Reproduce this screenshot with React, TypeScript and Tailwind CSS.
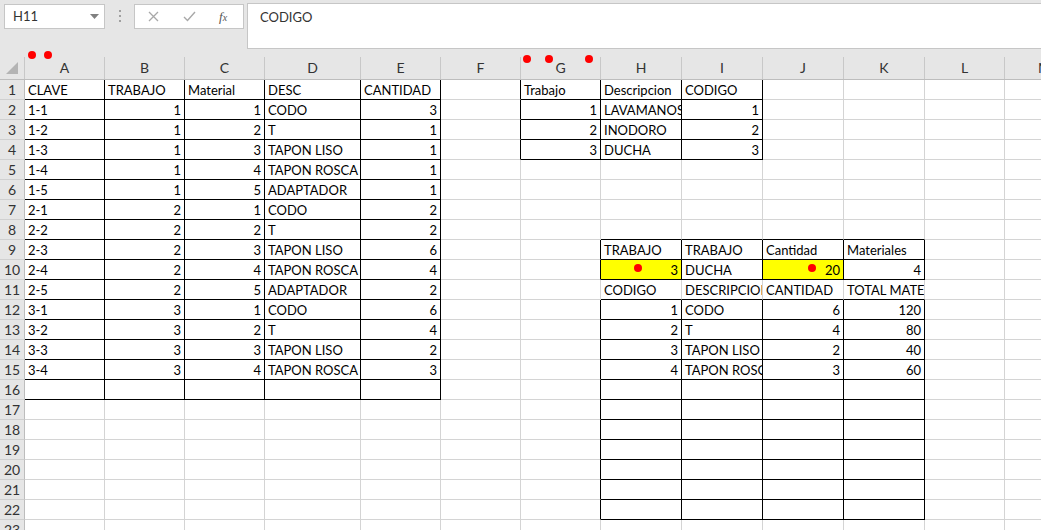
import React from "react";

const COLS = ["A", "B", "C", "D", "E", "F", "G", "H", "I", "J", "K", "L", "M"];
const ROWS = Array.from({ length: 23 }, (_, i) => i + 1);

type Val = string | number;

const cells: Record<string, Val> = {
  A1: "CLAVE", B1: "TRABAJO", C1: "Material", D1: "DESC", E1: "CANTIDAD",
  G1: "Trabajo", H1: "Descripcion", I1: "CODIGO",
  G2: 1, H2: "LAVAMANOS", I2: 1,
  G3: 2, H3: "INODORO", I3: 2,
  G4: 3, H4: "DUCHA", I4: 3,
  H9: "TRABAJO", I9: "TRABAJO", J9: "Cantidad", K9: "Materiales",
  H10: 3, I10: "DUCHA", J10: 20, K10: 4,
  H11: "CODIGO", I11: "DESCRIPCION", J11: "CANTIDAD", K11: "TOTAL MATERIALES",
  H12: 1, I12: "CODO", J12: 6, K12: 120,
  H13: 2, I13: "T", J13: 4, K13: 80,
  H14: 3, I14: "TAPON LISO", J14: 2, K14: 40,
  H15: 4, I15: "TAPON ROSCA", J15: 3, K15: 60,
};

// tabla principal
const main: [string, number, number, string, number][] = [
  ["1-1", 1, 1, "CODO", 3],
  ["1-2", 1, 2, "T", 1],
  ["1-3", 1, 3, "TAPON LISO", 1],
  ["1-4", 1, 4, "TAPON ROSCA", 1],
  ["1-5", 1, 5, "ADAPTADOR", 1],
  ["2-1", 2, 1, "CODO", 2],
  ["2-2", 2, 2, "T", 2],
  ["2-3", 2, 3, "TAPON LISO", 6],
  ["2-4", 2, 4, "TAPON ROSCA", 4],
  ["2-5", 2, 5, "ADAPTADOR", 2],
  ["3-1", 3, 1, "CODO", 6],
  ["3-2", 3, 2, "T", 4],
  ["3-3", 3, 3, "TAPON LISO", 2],
  ["3-4", 3, 4, "TAPON ROSCA", 3],
];
main.forEach((r, i) => {
  ["A", "B", "C", "D", "E"].forEach((c, j) => {
    cells[`${c}${i + 2}`] = r[j];
  });
});

const yellow = new Set(["H10", "J10"]);

// rangos con borde negro
function bordered(row: number, col: number) {
  if (col < 1) return false;
  if (row >= 1 && row <= 16 && col >= 1 && col <= 5) return true;
  if (row >= 1 && row <= 4 && col >= 7 && col <= 9) return true;
  if (row >= 9 && row <= 10 && col >= 8 && col <= 11) return true;
  if (row >= 12 && row <= 22 && col >= 8 && col <= 11) return true;
  return false;
}

const dots = [
  [32, 55], [48, 55], [527, 59], [549, 59], [589, 59], [638, 268], [812, 268],
];

function Cell({ row, col }: { row: number; col: number }) {
  const key = `${COLS[col - 1]}${row}`;
  const v = cells[key];
  const rightBlack = bordered(row, col) || bordered(row, col + 1);
  const bottomBlack = bordered(row, col) || bordered(row + 1, col);
  const isNum = typeof v === "number";
  return (
    <div
      className={`h-[20px] overflow-hidden whitespace-nowrap border-r border-b px-[3px] text-[13px] leading-[20px] text-black ${
        rightBlack ? "border-r-black" : "border-r-[#d4d4d4]"
      } ${bottomBlack ? "border-b-black" : "border-b-[#d4d4d4]"} ${yellow.has(key) ? "bg-[#ffff00]" : "bg-white"} ${
        isNum ? "text-right" : "text-left"
      }`}
    >
      {v ?? ""}
    </div>
  );
}

export default function App() {
  return (
    <div
      className="relative h-[530px] w-[1041px] overflow-hidden bg-white"
      style={{ fontFamily: 'Lato, "Liberation Sans", Arial, sans-serif' }}
    >
      {/* barra de formulas */}
      <div className="flex h-[49px] items-start bg-[#e6e6e6]">
        <div className="ml-[4px] mt-[4px] flex h-[25px] w-[101px] items-center justify-between border border-[#c6c6c6] bg-white pl-[8px] pr-[5px] text-[13px] text-[#333]">
          <span>H11</span>
          <svg width="9" height="5" viewBox="0 0 9 5">
            <path d="M0 0h9L4.5 5z" fill="#808080" />
          </svg>
        </div>
        <div className="ml-[14px] mt-[10px] flex flex-col gap-[3px]">
          <span className="h-[2px] w-[2px] bg-[#a0a0a0]" />
          <span className="h-[2px] w-[2px] bg-[#a0a0a0]" />
          <span className="h-[2px] w-[2px] bg-[#a0a0a0]" />
        </div>
        <div className="ml-[13px] mt-[4px] flex h-[25px] w-[110px] items-center border border-[#c6c6c6] bg-white">
          <svg className="ml-[13px]" width="11" height="11" viewBox="0 0 11 11">
            <path d="M1 1l9 9M10 1l-9 9" stroke="#a8a8a8" strokeWidth="1.3" />
          </svg>
          <svg className="ml-[24px]" width="13" height="11" viewBox="0 0 13 11">
            <path d="M1 6l3.5 3.5L12 1" stroke="#a8a8a8" strokeWidth="1.4" fill="none" />
          </svg>
          <span
            className="ml-[23px] text-[13px] italic text-[#555]"
            style={{ fontFamily: '"Liberation Serif", serif' }}
          >
            f<span className="text-[10px]">x</span>
          </span>
        </div>
        <div className="ml-[3px] mt-[3px] h-[46px] flex-1 border border-r-0 border-[#c6c6c6] bg-white pl-[12px] pt-[4px] text-[13px] text-[#333]">
          CODIGO
        </div>
      </div>

      {/* hoja */}
      <div className="grid grid-cols-[25px_80px_80px_80px_96px_80px_80px_80px_81px_81px_81px_81px_80px_80px]">
        <div className="flex h-[31px] items-end border-b border-[#bdbdbd] bg-[#e6e6e6]">
          <div className="flex h-[22px] w-full items-center justify-center border-r border-[#c8c8c8]">
            <svg width="12" height="12" viewBox="0 0 12 12">
              <path d="M12 0V12H0z" fill="#b4b4b4" />
            </svg>
          </div>
        </div>
        {COLS.map((c) => (
          <div key={c} className="flex h-[31px] items-end border-b border-[#bdbdbd] bg-[#e6e6e6]">
            <div className="h-[22px] w-full border-r border-[#c8c8c8] text-center text-[14px] leading-[22px] text-[#333]">
              {c}
            </div>
          </div>
        ))}
        {ROWS.map((r) => (
          <React.Fragment key={r}>
            <div className="h-[20px] border-r border-b border-r-[#bdbdbd] border-b-[#d0d0d0] bg-[#e6e6e6] text-center text-[14px] leading-[20px] text-[#333]">
              {r}
            </div>
            {COLS.map((c, i) => (
              <Cell key={c} row={r} col={i + 1} />
            ))}
          </React.Fragment>
        ))}
      </div>

      {dots.map(([x, y], i) => (
        <span
          key={i}
          className="absolute h-[8px] w-[8px] -translate-x-1/2 -translate-y-1/2 rounded-full bg-[#ff0000]"
          style={{ left: x, top: y }}
        />
      ))}
    </div>
  );
}
